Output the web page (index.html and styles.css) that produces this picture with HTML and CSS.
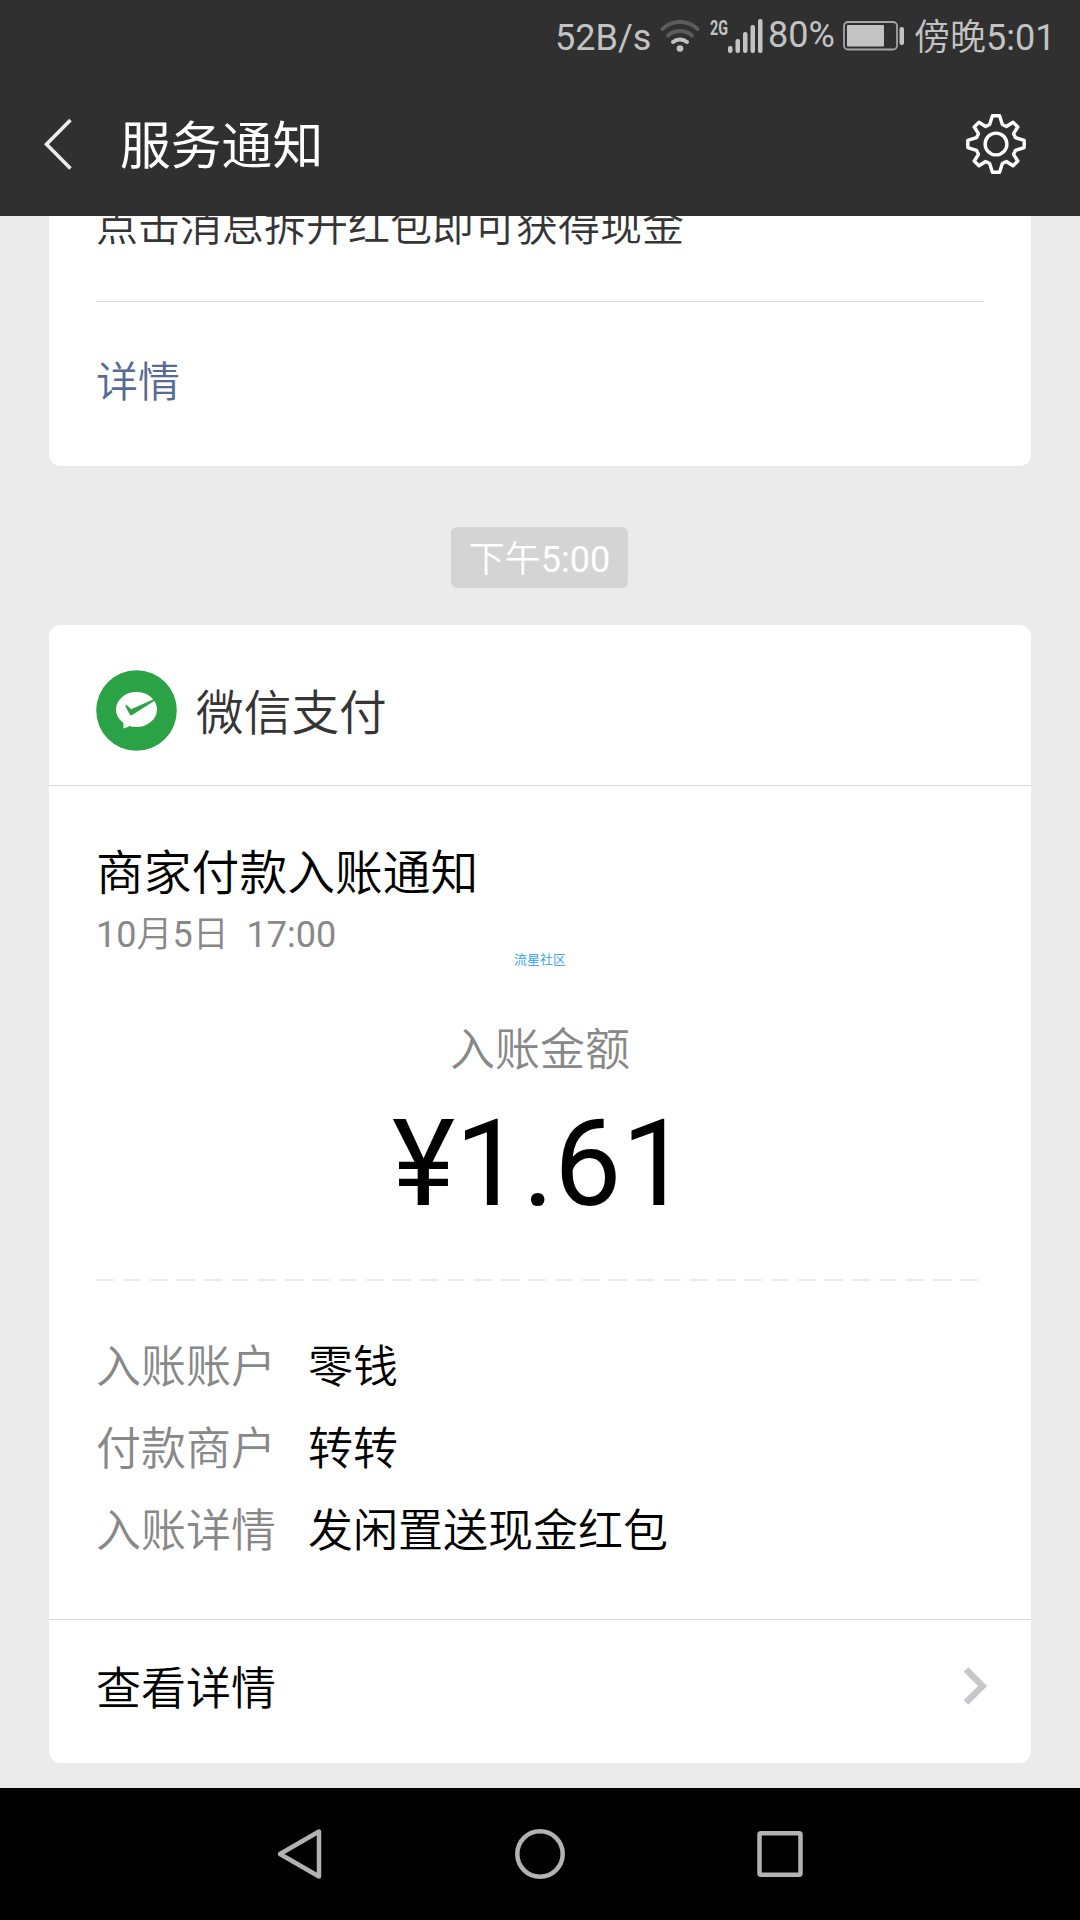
FILE: index.html
```html
<!DOCTYPE html>
<html lang="zh-CN">
<head>
<meta charset="utf-8">
<title>服务通知</title>
<link rel="stylesheet" href="styles.css">
</head>
<body>
<div class="phone">
  <header class="top">
    <div class="status">
      <span class="status-text speed num">52B/s</span>
      <svg class="wifi" width="40" height="34" viewBox="0 0 40 34" fill="none" stroke-width="4" stroke-linecap="round">
        <path d="M2.5 10C12 .6 28 .6 37.500 10" stroke="#5c5c5c"/>
        <path d="M8 16.500C14.500 10.500 25.500 10.500 32 16.500" stroke="#5c5c5c"/>
        <path d="M13 23C17 19.500 23 19.500 27 23" stroke="#c3c3c3"/>
        <circle cx="20" cy="29.500" r="3.300" fill="#c3c3c3"/>
      </svg>
      <svg class="signal" width="53" height="34" viewBox="-1 0 53 34" fill="#c3c3c3">
        <text class="net" x="-1" y="15.500" textLength="18" lengthAdjust="spacingAndGlyphs">2G</text>
        <rect x="17" y="27" width="4.500" height="7" rx="2"/>
        <rect x="24.500" y="20" width="4.500" height="14" rx="2"/>
        <rect x="32" y="13" width="4.500" height="21" rx="2"/>
        <rect x="39.500" y="6" width="4.500" height="28" rx="2"/>
        <rect x="47" y="0" width="4.500" height="34" rx="2"/>
      </svg>
      <span class="status-text percent num">80%</span>
      <svg class="battery" width="62" height="30" viewBox="0 0 62 30">
        <rect x="1" y="1" width="53" height="27.500" rx="4" fill="none" stroke="#a5a5a5" stroke-width="1.800"/>
        <rect x="4" y="4" width="37" height="21.500" rx="1" fill="#c3c3c3"/>
        <rect x="56.500" y="6" width="4.500" height="18" rx="2" fill="#c3c3c3"/>
      </svg>
      <span class="status-text clock">傍晚<span class="num">5:01</span></span>
    </div>
    <div class="bar">
      <svg class="back" width="30" height="52" viewBox="0 0 30 52" fill="none" stroke="#ebebeb" stroke-width="3.600"><path d="M27.500 2L3.500 26.200L27.500 50.400"/></svg>
      <h1 class="title">服务通知</h1>
      <svg class="gear" width="62" height="62" viewBox="-31 -31 62 62" fill="none" stroke="#fff" stroke-width="3.400" stroke-linejoin="round">
        <path d="M-6.300-19.500L-3.600-28.200H3.600L6.300-19.500L10.300-17.500L17-21.800L21.800-17L17.500-10.300L19.500-6.300L28.200-3.600V3.600L19.500 6.300L17.500 10.300L21.800 17L17 21.800L10.300 17.500L6.300 19.500L3.600 28.200H-3.600L-6.300 19.500L-10.300 17.500L-17 21.800L-21.800 17L-17.500 10.300L-19.500 6.300L-28.200 3.600V-3.600L-19.500-6.300L-17.500-10.300L-21.800-17L-17-21.800L-10.300-17.500Z"/>
        <circle r="10.900"/>
      </svg>
    </div>
  </header>
  <main class="feed">
    <section class="card previous">
      <p class="remark">点击消息拆开红包即可获得现金</p>
      <a class="detail-link">详情</a>
    </section>
    <time class="stamp">下午<span class="num">5:00</span></time>
    <section class="card payment">
      <div class="sender">
        <svg class="logo" width="82" height="82" viewBox="0 0 82 82">
          <circle cx="40.500" cy="40.500" r="40.300" fill="#2ba245"/>
          <ellipse cx="40.500" cy="39.500" rx="20.500" ry="17.500" fill="#fff"/>
          <path d="M24.500 49.500Q29 52 27 58.500Q32.500 57.500 36.500 54Z" fill="#fff"/>
          <path d="M29 35.500Q31 34.500 35 39.200L60.500 28V29.500L36.500 44.800Q34.500 46.500 33.500 44Z" fill="#2ba245"/>
        </svg>
        <span class="name">微信支付</span>
      </div>
      <div class="body">
        <h2 class="subject">商家付款入账通知</h2>
        <p class="date"><span class="num">10</span>月<span class="num">5</span>日<span class="num">&nbsp; 17:00</span></p>
        <p class="mark">流星社区</p>
        <p class="caption">入账金额</p>
        <p class="amount num">¥1.61</p>
        <div class="dashes"></div>
        <dl class="facts">
          <dt>入账账户</dt><dd>零钱</dd>
          <dt>付款商户</dt><dd>转转</dd>
          <dt>入账详情</dt><dd>发闲置送现金红包</dd>
        </dl>
      </div>
      <div class="more">
        <span>查看详情</span>
        <svg class="chevron" width="26" height="40" viewBox="0 0 26 40" fill="none" stroke="#c7c7cc" stroke-width="6.500"><path d="M3 3.500L19.500 20L3 36.500"/></svg>
      </div>
    </section>
  </main>
  <nav class="keys">
    <svg width="52" height="52" viewBox="0 0 52 52"><path d="M45 3.500V48.500L6 26Z"/></svg>
    <svg width="52" height="52" viewBox="0 0 52 52"><circle cx="26" cy="26" r="22.700"/></svg>
    <svg width="52" height="52" viewBox="0 0 52 52"><rect x="5.500" y="5.200" width="41" height="41.600" rx="1.500"/></svg>
  </nav>
</div>
</body>
</html>
```
FILE: styles.css
```css
* {
  box-sizing: border-box;
  margin: 0;
  padding: 0;
}

body {
  font-family: Roboto, "Noto Sans CJK SC", sans-serif;
  font-weight: 350;
  background: #ebebeb;
}

.phone {
  display: flex;
  flex-direction: column;
  width: 1080px;
  height: 1920px;
  overflow: hidden;
}

svg {
  display: block;
  flex: none;
  overflow: visible;
}

h1, h2 {
  font-weight: inherit;
}

.num {
  font-weight: 400;
}

/* status and title bars */
.top {
  height: 216px;
  background: #303030;
}

.status {
  display: flex;
  align-items: flex-start;
  height: 72px;
  padding: 19px 0 0 555px;
  color: #c3c3c3;
}

.status-text {
  font-size: 36px;
  line-height: 38px;
  white-space: nowrap;
}

.speed { width: 105px; }
.wifi { margin-right: 10px; }
.signal { margin-right: 5px; }
.percent { width: 75px; margin-top: -3px; }
.battery { margin: 2px 9px 0 0; }
.net { font: 700 21px Roboto, sans-serif; }

.bar {
  display: flex;
  align-items: center;
  height: 144px;
  padding: 0 53px 0 43px;
}

.title {
  flex: 1;
  margin-left: 47px;
  padding-top: 5px;
  font-size: 50.8px;
  line-height: 70px;
  font-weight: 400;
  color: #fff;
}

/* message list */
.feed {
  flex: 1;
  display: flex;
  flex-direction: column;
  align-items: center;
  overflow: hidden;
}

.card {
  flex: none;
  width: 982px;
  background: #fff;
  border-radius: 12px;
}

.previous {
  height: 285px;
  margin-top: -35px;
  padding: 16px 47px 0;
}

.remark {
  height: 105px;
  font-size: 42px;
  line-height: 60px;
  color: #353535;
  border-bottom: 1px solid #d9d9d9;
}

.detail-link {
  display: block;
  padding-top: 51px;
  font-size: 42px;
  line-height: 60px;
  color: #576b95;
}

.stamp {
  width: 177px;
  height: 61px;
  margin: 61px 1px 37px 0;
  padding-top: 3px;
  border-radius: 6px;
  background: #d4d4d4;
  color: #fff;
  font-size: 36px;
  line-height: 61px;
  text-align: center;
}

.payment {
  height: 1138px;
}

.sender {
  display: flex;
  align-items: center;
  height: 161px;
  padding: 12px 47px 0;
  border-bottom: 1px solid #d9d9d9;
}

.name {
  margin-left: 18px;
  padding-top: 6px;
  font-size: 47.7px;
  line-height: 66px;
  color: #353535;
}

.body {
  height: 834px;
  padding: 53px 47px 0;
  border-bottom: 1px solid #d9d9d9;
}

.subject {
  font-size: 47.8px;
  line-height: 70px;
}

.date {
  padding-top: 2px;
  font-size: 36px;
  line-height: 48px;
  color: #888;
}

.mark {
  height: 26px;
  margin-top: -8px;
  font-size: 13px;
  line-height: 18px;
  text-align: center;
  color: #2a9df4;
}

.caption {
  margin-top: 41px;
  font-size: 45px;
  line-height: 66px;
  text-align: center;
  color: #888;
}

.amount {
  height: 195px;
  padding: 10px 0 0 1px;
  font-size: 120px;
  line-height: 140px;
  text-align: center;
}

.dashes {
  height: 2px;
  width: 882px;
  background: repeating-linear-gradient(90deg, #ebebeb 0 18px, transparent 18px 27px);
}

.facts {
  display: grid;
  grid-template-columns: 212px 1fr;
  margin-top: 46px;
  font-size: 45px;
  line-height: 82px;
}

.facts dt {
  color: #888;
}

.more {
  display: flex;
  justify-content: space-between;
  align-items: center;
  height: 143px;
  padding: 0 42px 12px 47px;
  font-size: 45px;
}

/* system navigation keys */
.keys {
  display: flex;
  justify-content: space-between;
  align-items: center;
  height: 132px;
  padding: 0 274px;
  background: #000;
  fill: none;
  stroke: #b2b2b2;
  stroke-width: 4.500;
  stroke-linejoin: round;
}
```
